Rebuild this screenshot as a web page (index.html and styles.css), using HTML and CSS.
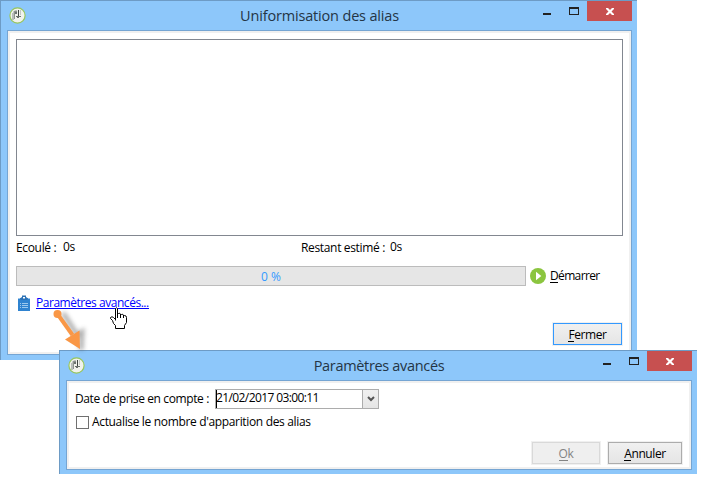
FILE: index.html
```html
<!DOCTYPE html>
<html lang="fr">
<head>
<meta charset="utf-8">
<title>Uniformisation des alias</title>
<link rel="stylesheet" href="styles.css">
</head>
<body>
<svg class="defs" width="0" height="0" aria-hidden="true">
  <symbol id="app" viewBox="0 0 17 17">
    <circle cx="8.5" cy="8.5" r="7.6" fill="#f1f2ec" stroke="#98c65c" stroke-width="1.2"/>
    <path d="M3 6h2v7H3z" fill="#b9beb9"/>
    <path d="M4 5l2-1.500h2V5L6 6v6H5V6z" fill="#8d938f"/>
    <path d="M6 5h2v2H6z" fill="#6d736f"/>
    <path d="M9 3h1v6H9z" fill="#3f4541"/>
    <path d="M7 9h5v1h-2v1H8v-1H7z" fill="#6a706b"/>
    <path d="M11 3h1v5h-1z" fill="#c4c8c2"/>
  </symbol>
  <symbol id="min" viewBox="0 0 8 2"><path d="M0 0h8v2H0z" fill="#222"/></symbol>
  <symbol id="max" viewBox="0 0 10 8"><path d="M0 0h10v8H0zM1 2v5h8V2z" fill="#222" fill-rule="evenodd"/></symbol>
  <symbol id="close" viewBox="0 0 8 7"><path d="M0 0h2l2 2 2-2h2v1L5.500 3.500 8 6v1H6L4 5 2 7H0V6l2.500-2.500L0 1z" fill="#fff"/></symbol>
</svg>

<section class="window main">
  <header class="titlebar">
    <svg class="app"><use href="#app"/></svg>
    <h1 class="title">Uniformisation des alias</h1>
    <svg class="min"><use href="#min"/></svg>
    <svg class="max"><use href="#max"/></svg>
    <button class="close" aria-label="Fermer la fenêtre"><svg><use href="#close"/></svg></button>
  </header>
  <div class="client">
    <div class="log"></div>
    <div class="times">
      <span class="elapsed-label">Ecoulé :</span><span class="elapsed">0s</span>
      <span class="left-label">Restant estimé :</span><span class="left">0s</span>
    </div>
    <div class="progress-row">
      <div class="progress"><span>0 %</span></div>
      <svg class="play" viewBox="0 0 16 16"><circle cx="8" cy="8" r="8" fill="#8bc53f"/><path d="M6 3.700L11.300 8 6 12.300z" fill="#fff"/></svg>
      <span class="start"><u>D</u>émarrer</span>
    </div>
    <div class="link-row">
      <svg class="clip" viewBox="0 0 12 16"><path d="M0 3h12v13H0z" fill="#2f83d0"/><path d="M0 3h2v1H0zM10 3h2v1h-2z" fill="#9cc6ec"/><path d="M2.500 5V3L4 2V.5h4V2l1.500 1v2z" fill="#2d72b5"/><path d="M5 2h2v1.500H5z" fill="#fff"/><path d="M2 8.500h1M4 8.500h6M2 10.500h1M4 10.500h6M2 12.500h1M4 12.500h6" stroke="#b9daf5" stroke-width=".8"/></svg>
      <a class="link" href="#">Paramètres avancés...</a>
    </div>
    <div class="actions"><button class="btn default"><span><u>F</u>ermer</span></button></div>
  </div>
</section>

<section class="window dialog">
  <header class="titlebar">
    <svg class="app"><use href="#app"/></svg>
    <h1 class="title">Paramètres avancés</h1>
    <svg class="min"><use href="#min"/></svg>
    <svg class="max"><use href="#max"/></svg>
    <button class="close" aria-label="Fermer la fenêtre"><svg><use href="#close"/></svg></button>
  </header>
  <div class="client">
    <div class="date-row">
      <span class="date-label">Date de prise en compte :</span>
      <div class="combo"><span class="date">21/02/2017 03:00:11</span><i class="drop"><svg viewBox="0 0 8 6"><path d="M1 1l3 3 3-3" fill="none" stroke="#555" stroke-width="2"/></svg></i></div>
    </div>
    <div class="check-row"><i class="check"></i><span class="check-label">Actualise le nombre d'apparition des alias</span></div>
    <div class="actions"><button class="btn ok" disabled><span><u>O</u>k</span></button><button class="btn cancel"><span><u>A</u>nnuler</span></button></div>
  </div>
</section>

<svg class="arrow" viewBox="0 0 40 54">
  <path d="M11 8l14 22 5-3-1 18" fill="none" stroke="#555" stroke-width="5" opacity=".45" class="shade"/>
  <path d="M5.500 9l15 21" stroke="#f99746" stroke-width="4"/>
  <circle cx="5.500" cy="9" r="4" fill="#f99746"/>
  <path d="M13 34.500L27.500 25.500 28 44z" fill="#f99746"/>
</svg>
<svg class="hand" viewBox="0 0 17 22">
  <path d="M5.500 13.500V1.500Q6.500 0 7.500 1.500V6.500H8.500Q10 5.500 10.500 7.500H11.500Q13 6.500 13.500 8.500H14.500Q16.500 8.500 16.500 10.500V15.500L14.500 18.500V21.500H5.500V18.500L3.500 16.500 2.500 13.500 .5 11.500V10.500Q2 9 3.500 10.500L5.500 12.500" fill="#fff" stroke="#000"/>
  <path d="M7.500 6v5M10.500 7v4M13.500 8v3" stroke="#000"/>
</svg>
</body>
</html>
```

FILE: styles.css
```css
* { box-sizing: border-box; }
body {
  margin: 0; width: 719px; height: 501px; overflow: hidden; position: relative;
  background: #fff; color: #000;
  font: 12px/16px "Open Sans", "Noto Sans", sans-serif;
  letter-spacing: -.34px;
}
svg { display: block; flex: none; }
.defs { position: absolute; }
span, a { white-space: nowrap; }
u { text-decoration: none; border-bottom: 1px solid; display: inline-block; line-height: 13px; }

.window {
  position: absolute; background: #8dc7fa; border: solid #6d9bc5;
  border-width: 1px 0 0 1px; padding: 0 5px 0 6px;
}
.main { left: 0; top: 0; width: 637px; height: 360px; }
.dialog { left: 59px; top: 350px; width: 638px; height: 124px; }
.titlebar { display: flex; align-items: flex-start; height: 29px; }
.app { width: 17px; height: 17px; margin: 6px 0 0 2px; }
.title {
  flex: 1; margin: 4px 0 0; text-align: center; color: #243545;
  font-size: 14.5px; font-weight: 400; line-height: 22px; white-space: nowrap;
}
.min { width: 8px; height: 2px; margin: 12px 18px 0 0; }
.max { width: 10px; height: 8px; margin: 6px 8px 0 0; }
.close { width: 45px; height: 20px; border: 0; padding: 0; background: #c75050; display: grid; place-items: center; }
.close svg { width: 8px; height: 7px; }
.client { background: #fff; border: 1px solid #75a5d3; box-shadow: inset 0 0 0 2px #f0f0f0; }
.main .client { height: 325px; padding: 8px; }
.dialog .client { height: 90px; padding: 8px; }
.main .title { padding-left: 70px; letter-spacing: -.17px; }
.dialog .title { padding-left: 70px; letter-spacing: -.33px; }

.log { width: 607px; height: 197px; border: 1px solid #828790; }
.times { display: flex; height: 16px; margin-top: 4px; }
.elapsed-label { width: 47px; }
.elapsed { width: 238px; margin-top: -1px; }
.left-label { width: 89px; }
.left { margin-top: -1px; }
.progress-row { display: flex; align-items: center; height: 20px; margin-top: 10px; }
.progress { width: 510px; height: 20px; border: 1px solid #bcbcbc; background: #e6e6e6; color: #3399ff; text-align: center; line-height: 19px; letter-spacing: 0; }
.play { width: 16px; height: 16px; margin: 0 4px; }
.start { letter-spacing: -.65px; }
.link-row { display: flex; align-items: center; height: 18px; margin-top: 8px; padding-left: 2px; }
.clip { width: 12px; height: 16px; margin: -1px 6px 0 0; }
.link { color: #00f; text-decoration: none; border-bottom: 1px solid #00f; height: 14px; line-height: 16px; margin-top: -3px; letter-spacing: -.46px; }
.actions { display: flex; justify-content: flex-end; gap: 8px; }
.main .actions { margin: 11px 1px 0 0; }
.btn {
  height: 22px; padding: 0; border: 1px solid #acacac; color: #000;
  background: linear-gradient(#f0f0f0, #e5e5e5); box-shadow: 0 0 0 1px #f0f0f0;
  font: inherit; line-height: 19px; letter-spacing: -.4px;
}
.default { width: 69px; border-color: #3399ff; }
.ok { width: 68px; color: #838383; background: #efefef; border-color: #d9d9d9; }
.cancel { width: 74px; }
.date-row { display: flex; align-items: center; height: 20px; }
.date-label { width: 140px; margin-top: -1px; flex: none; letter-spacing: -.38px; }
.combo { display: flex; width: 164px; height: 20px; border: 1px solid #acacac; }
.date { flex: 1; border-left: 1px solid #000; line-height: 16px; height: 18px; letter-spacing: -.6px; text-indent: -1px; }
.drop { display: grid; place-items: center; width: 16px; border-left: 1px solid #acacac; background: linear-gradient(#f0f0f0, #e5e5e5); }
.drop svg { width: 8px; height: 6px; }
.check-row { display: flex; align-items: center; height: 14px; margin-top: 6px; padding-left: 1px; }
.check { width: 13px; height: 13px; border: 1px solid #707070; margin-right: 3px; }
.dialog .actions { margin: 13px 1px 0 0; }

.arrow { position: absolute; left: 52px; top: 305px; width: 40px; height: 54px; }
.shade { filter: blur(2px); }
.hand { position: absolute; left: 110px; top: 307px; width: 17px; height: 22px; }
```
